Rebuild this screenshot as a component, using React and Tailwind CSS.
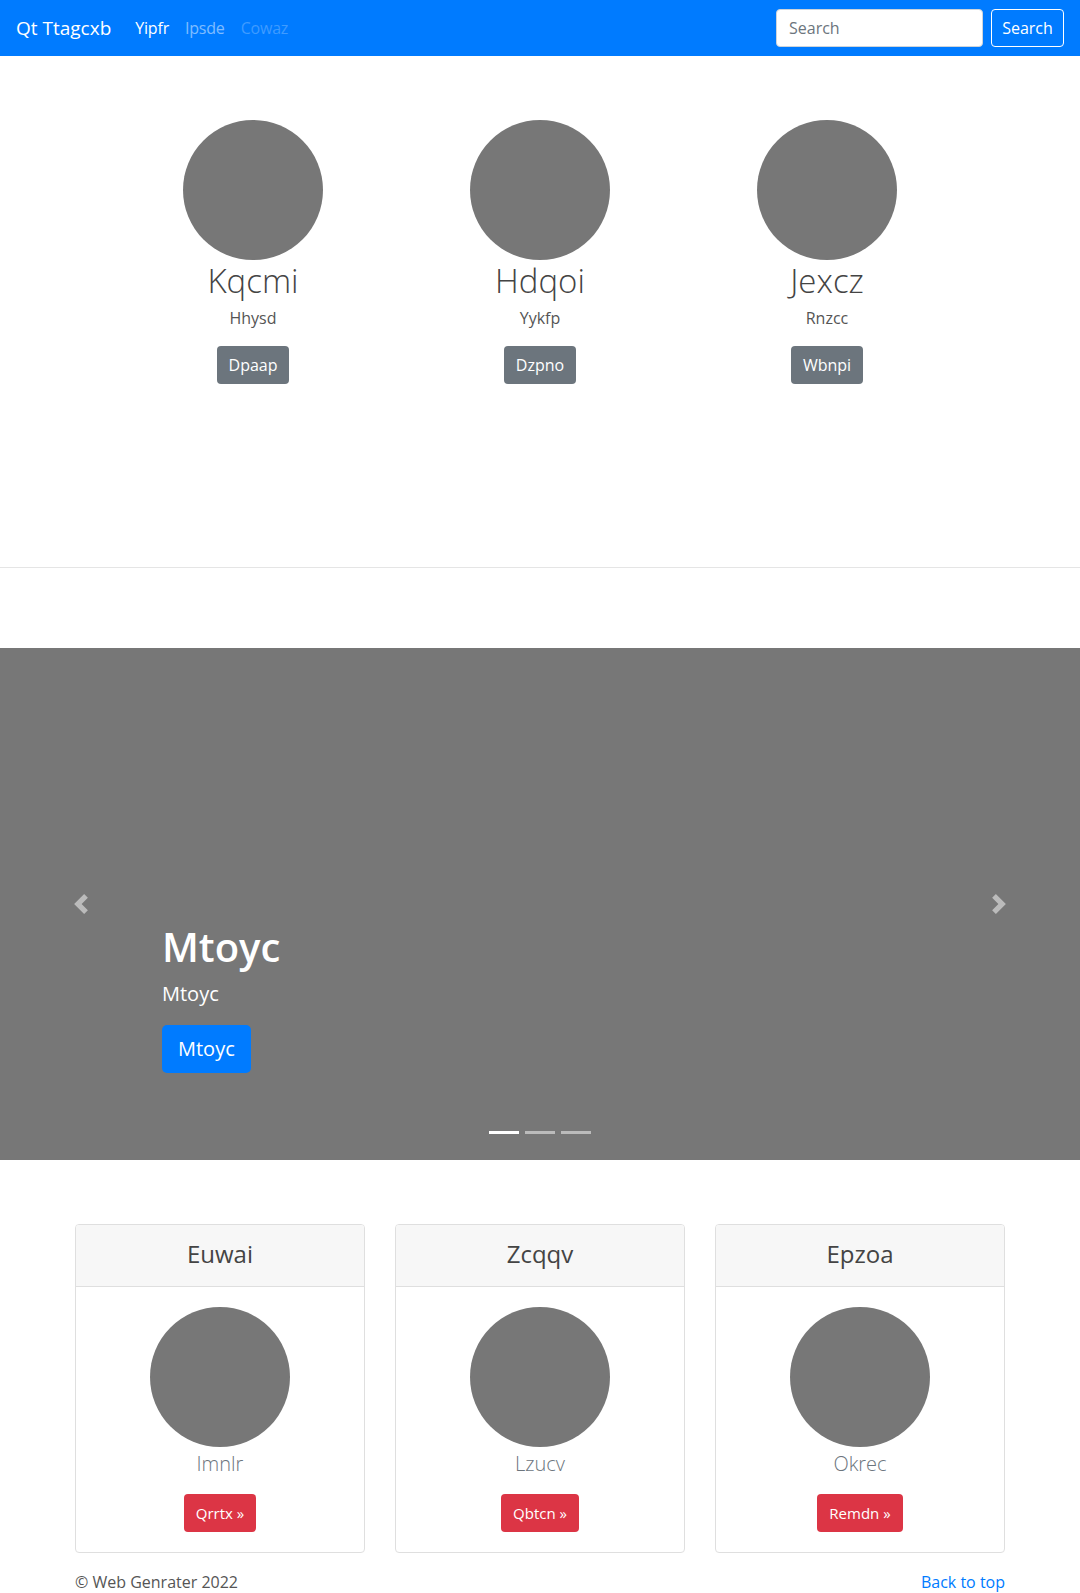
import { useState } from 'react'

const FONT = "font-['Open_Sans','Noto_Sans',sans-serif]"

const features = [
  { title: 'Kqcmi', text: 'Hhysd', cta: 'Dpaap' },
  { title: 'Hdqoi', text: 'Yykfp', cta: 'Dzpno' },
  { title: 'Jexcz', text: 'Rnzcc', cta: 'Wbnpi' },
]

const cards = [
  { title: 'Euwai', text: 'Imnlr', cta: 'Qrrtx' },
  { title: 'Zcqqv', text: 'Lzucv', cta: 'Qbtcn' },
  { title: 'Epzoa', text: 'Okrec', cta: 'Remdn' },
]

function Chevron({ dir }) {
  return (
    <svg width="20" height="20" viewBox="0 0 8 8" fill="#fff">
      {dir === 'prev' ? (
        <path d="M5.25 0l-4 4 4 4 1.5-1.5L4.25 4l2.5-2.5L5.25 0z" />
      ) : (
        <path d="M2.75 0l-1.5 1.5L3.75 4l-2.5 2.5L2.75 8l4-4-4-4z" />
      )}
    </svg>
  )
}

export default function App() {
  const [slide] = useState(0)

  return (
    <div className={`${FONT} text-[#212529] bg-white min-h-[1593px]`}>
      {/* Navbar */}
      <nav className="h-[56px] bg-[#007bff] flex items-center justify-between px-4">
        <div className="flex items-center">
          <span className="text-white text-[19px] leading-[30px] mr-4">Qt Ttagcxb</span>
          <div className="flex items-center text-[16px] tracking-[-0.2px]">
            <span className="px-2 text-white">Yipfr</span>
            <span className="px-2 text-white/50">Ipsde</span>
            <span className="px-2 text-white/25">Cowaz</span>
          </div>
        </div>
        <div className="flex items-center gap-2">
          <input
            placeholder="Search"
            className="w-[207px] h-[38px] rounded bg-white border border-[#ced4da] px-3 text-[16px] placeholder:text-[#6c757d] outline-none"
          />
          <button className="w-[73px] h-[38px] rounded border border-white text-white text-[16px]">Search</button>
        </div>
      </nav>

      {/* Marketing */}
      <section className="pt-[64px]">
        <div className="w-[861px] mx-auto grid grid-cols-3">
          {features.map((f) => (
            <div key={f.title} className="flex flex-col items-center text-center">
              <div className="w-[140px] h-[140px] rounded-full bg-[#777]" />
              <h2 className="text-[33px] font-light leading-[42px] text-[#444] mb-[4px]">{f.title}</h2>
              <p className="text-[16px] leading-[24px] text-[#555] mb-[16px]">{f.text}</p>
              <button className="h-[38px] px-3 rounded bg-[#6c757d] text-white text-[16px]">{f.cta}</button>
            </div>
          ))}
        </div>
      </section>

      <hr className="mt-[183px] mb-[80px] border-0 border-t border-[#e5e5e5]" />

      {/* Carousel */}
      <section className="relative h-[512px] bg-[#777] flex flex-col justify-end px-[15%] pb-[87px] text-white">
        <h1 className="text-[40px] font-semibold leading-[48px] mb-2">Mtoyc</h1>
        <p className="text-[20px] leading-[30px] mb-4">Mtoyc</p>
        <div>
          <button className="h-[48px] px-4 rounded-[5px] bg-[#007bff] text-white text-[20px]">Mtoyc</button>
        </div>

        <div className="absolute left-0 top-0 h-full w-[15%] flex items-center justify-center opacity-50">
          <Chevron dir="prev" />
        </div>
        <div className="absolute right-0 top-0 h-full w-[15%] flex items-center justify-center opacity-50">
          <Chevron dir="next" />
        </div>
        <div className="absolute left-0 right-0 bottom-[26px] flex justify-center gap-[6px]">
          {[0, 1, 2].map((i) => (
            <span key={i} className={i === slide ? 'w-[30px] h-[3px] bg-white' : 'w-[30px] h-[3px] bg-white/50'} />
          ))}
        </div>
      </section>

      {/* Cards */}
      <section className="w-[930px] mx-auto mt-[64px] grid grid-cols-3 gap-[30px]">
        {cards.map((c) => (
          <div key={c.title} className="border border-[#dfdfdf] rounded overflow-hidden text-center">
            <div className="bg-[#f7f7f7] border-b border-[#dfdfdf] pt-[14px] pb-[18px]">
              <h4 className="text-[24px] leading-[29px] font-medium text-[#444]">{c.title}</h4>
            </div>
            <div className="p-5 flex flex-col items-center">
              <div className="w-[140px] h-[140px] rounded-full bg-[#777]" />
              <p className="text-[20px] leading-[30px] font-light text-[#6c757d] mt-[2px] mb-[15px]">{c.text}</p>
              <button className="h-[38px] px-3 rounded bg-[#dc3545] text-white text-[15px]">{c.cta} »</button>
            </div>
          </div>
        ))}
      </section>

      {/* Footer */}
      <footer className="w-[930px] mx-auto pt-[17px] flex justify-between text-[16px] leading-[24px]">
        <span className="text-[#555]">© Web Genrater 2022</span>
        <span className="text-[#007bff]">Back to top</span>
      </footer>
    </div>
  )
}
